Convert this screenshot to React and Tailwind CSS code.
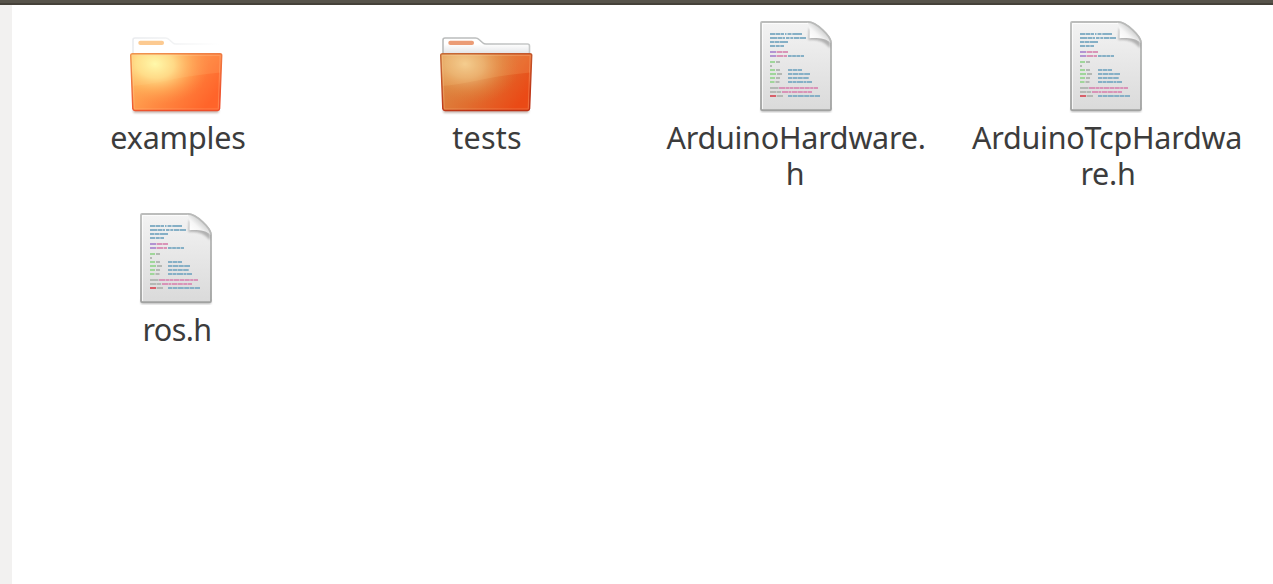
const BLUE = '#86b0c6';
const PINK = '#d994b8';
const PURPLE = '#b394d2';
const GREEN = '#a0d69a';
const GRAY = '#b4b8b4';
const RED = '#d8606a';

// [y, [x, width, colour], ...] for every line of code on the page icon
const CODE = [
  [15, [22, 5, BLUE], [27.5, 4.5, BLUE], [32.5, 3.5, BLUE], [37, 1.5, BLUE], [39.5, 4, BLUE], [44.3, 9.7, BLUE]],
  [19, [22, 7.5, BLUE], [30, 4.5, BLUE], [35, 2, BLUE], [38, 3.5, BLUE], [42.3, 3, BLUE], [46, 5.5, BLUE], [52, 6, BLUE]],
  [23, [22, 4.3, BLUE], [26.7, 4.4, BLUE], [31.5, 8.5, BLUE]],
  [27, [22, 5, BLUE], [27.7, 4, BLUE], [32.3, 3.7, BLUE]],
  [33, [22, 6, PURPLE], [28.6, 5.4, PINK], [34.5, 5.5, PINK]],
  [37, [22, 6, PURPLE], [28.6, 6.4, PINK], [35.6, 3.4, PINK], [40, 3.7, BLUE], [44.2, 3.7, BLUE], [48.4, 4, BLUE], [53, 3, BLUE]],
  [43, [22, 5, GREEN], [28, 4, GRAY]],
  [47, [22, 2, GRAY]],
  [51, [22, 5, GREEN], [28, 4, GRAY], [40, 4.3, BLUE], [44.8, 4.2, BLUE], [49.5, 4.5, BLUE]],
  [55, [22, 6, GREEN], [29, 5, GRAY], [40, 4.3, BLUE], [44.8, 5.2, BLUE], [50.5, 5.2, BLUE], [56.2, 5.8, BLUE]],
  [59, [22, 5, GREEN], [28, 4, GRAY], [40, 4.3, BLUE], [44.8, 4.2, BLUE], [49.5, 5.2, BLUE], [55.2, 5.5, BLUE]],
  [63, [22, 4.5, GREEN], [27.5, 4, GRAY], [40, 4.5, BLUE], [45, 3.4, BLUE], [48.8, 6.2, BLUE], [55.5, 3, BLUE], [59, 5, BLUE]],
  [69, [22, 8.5, GRAY], [31, 6.3, PINK], [37.7, 3.4, PINK], [41.5, 4, PINK], [46, 5.3, PINK], [51.7, 4.3, PINK], [56.5, 5.2, PINK], [62.2, 3.3, PINK], [66, 4, PINK]],
  [73, [22, 6.3, GRAY], [28.8, 4.3, GRAY], [34, 6.3, PINK], [40.7, 2.4, PINK], [43.7, 5.3, PINK], [49.5, 5.3, PINK], [55.3, 4.2, PINK], [60, 4, PINK]],
  [77, [22, 6, RED], [28.7, 6.3, GRAY], [40, 4.3, BLUE], [44.8, 4.2, BLUE], [49.5, 6.2, BLUE], [56.2, 5.3, BLUE], [62, 4.2, BLUE], [66.7, 5.3, BLUE]],
];

function Folder({ id, open }) {
  return (
    <svg className="block size-24 overflow-visible" viewBox="0 0 96 96" aria-hidden="true">
      <defs>
        <linearGradient id={id + '-base'} gradientUnits="userSpaceOnUse" x1="18" y1="34" x2="82" y2="84">
          <stop offset="0" stopColor={open ? '#ffb45c' : '#dc8c46'} />
          <stop offset="0.5" stopColor={open ? '#ff8a42' : '#e06f30'} />
          <stop offset="1" stopColor={open ? '#ff642a' : '#ea4a16'} />
        </linearGradient>
        <radialGradient
          id={id + '-glow'}
          gradientUnits="userSpaceOnUse"
          cx="0"
          cy="0"
          r="1"
          gradientTransform="translate(27 46) rotate(8) scale(54 40)"
        >
          <stop offset="0" stopColor={open ? '#ffffb0' : '#f3cc90'} />
          <stop offset="0.35" stopColor={open ? '#ffee98' : '#ebb878'} stopOpacity="0.78" />
          <stop offset="0.7" stopColor={open ? '#ffc468' : '#e29850'} stopOpacity="0.35" />
          <stop offset="1" stopColor={open ? '#ff9a4a' : '#de7c38'} stopOpacity="0" />
        </radialGradient>
        <linearGradient id={id + '-edge'} x1="0" y1="0" x2="0.4" y2="1">
          <stop offset="0" stopColor={open ? '#ef9450' : '#c56a38'} />
          <stop offset="1" stopColor={open ? '#ee4e2a' : '#bd3114'} />
        </linearGradient>
        <linearGradient id={id + '-back'} x1="0" y1="0" x2="1" y2="0">
          <stop offset="0" stopColor={open ? '#e9ebee' : '#b9bbbb'} />
          <stop offset="0.5" stopColor={open ? '#f2f3f4' : '#bcbebe'} />
          <stop offset="1" stopColor={open ? '#ffffff' : '#c6c8c8'} />
        </linearGradient>
        <linearGradient id={id + '-paper'} x1="0" y1="0" x2="0" y2="1">
          <stop offset="0.35" stopColor="#ffffff" />
          <stop offset="1" stopColor={open ? '#ffffff' : '#dfe1e4'} />
        </linearGradient>
        <filter id={id + '-blur'} x="-10%" y="-100%" width="120%" height="300%">
          <feGaussianBlur stdDeviation="1.2" />
        </filter>
      </defs>
      <rect x="5" y="91" width="86" height="4" rx="2" fill="#5b3020" opacity="0.35" filter={`url(#${id}-blur)`} />
      <path
        d="M5 37V22Q5 20 7 20H37.500Q39.500 20 41 21.500L45 25Q46 26 48 26H89.500Q91.500 26 91.500 28V37Z"
        fill={`url(#${id}-paper)`}
        stroke={`url(#${id}-back)`}
        strokeWidth="1.6"
      />
      <rect x="10.300" y="22.700" width="25.700" height="4.300" rx="2" fill={open ? '#fcca91' : '#eb9c76'} />
      <path
        d="M4.500 35.700H92Q94 35.700 93.700 37.700L91.600 90.700Q91.400 92.500 89.500 92.500H7Q5 92.500 4.800 90.700L2.700 37.700Q2.500 35.700 4.500 35.700Z"
        fill={`url(#${id}-base)`}
      />
      <path d="M3 36H93.500L92 91.500H5.500Z" fill={`url(#${id}-glow)`} />
      <path d="M3 36H93.500L92.500 54.500Q65 57 42 62T4 68Z" fill="#ffd490" opacity="0.15" />
      <path d="M4.200 37.300H92.200L90.300 91H6.200Z" fill="none" stroke="#ffd8a8" strokeOpacity="0.25" strokeWidth="1.2" />
      <path
        d="M4.500 35.700H92Q94 35.700 93.700 37.700L91.600 90.700Q91.400 92.500 89.500 92.500H7Q5 92.500 4.800 90.700L2.700 37.700Q2.500 35.700 4.500 35.700Z"
        fill="none"
        stroke={`url(#${id}-edge)`}
        strokeWidth="1.4"
      />
    </svg>
  );
}

function SourceFile({ id }) {
  return (
    <svg className="block size-24 overflow-visible" viewBox="0 0 96 96" aria-hidden="true">
      <defs>
        <linearGradient id={id + '-page'} x1="0" y1="0" x2="0" y2="1">
          <stop offset="0" stopColor="#f3f3f3" />
          <stop offset="1" stopColor="#dadada" />
        </linearGradient>
        <linearGradient id={id + '-edge'} x1="0" y1="0" x2="0" y2="1">
          <stop offset="0" stopColor="#bcbdbc" />
          <stop offset="1" stopColor="#a1a2a1" />
        </linearGradient>
        <linearGradient id={id + '-curl'} gradientUnits="userSpaceOnUse" x1="63" y1="22" x2="74" y2="10">
          <stop offset="0" stopColor="#ffffff" />
          <stop offset="0.5" stopColor="#f6f6f6" />
          <stop offset="1" stopColor="#cbcccc" />
        </linearGradient>
        <filter id={id + '-blur'} x="-20%" y="-20%" width="140%" height="140%">
          <feGaussianBlur stdDeviation="1.3" />
        </filter>
      </defs>
      <rect x="13" y="90" width="70" height="4" rx="1" fill="#333333" opacity="0.35" filter={`url(#${id}-blur)`} />
      <path
        d="M14 4H60C68 4 83 18 83 25V91Q83 92.200 82 92.200H14Q13 92.200 13 91V5Q13 4 14 4Z"
        fill={`url(#${id}-page)`}
        stroke={`url(#${id}-edge)`}
        strokeWidth="1.8"
      />
      <path d="M14.500 91V5.500H60" fill="none" stroke="#ffffff" strokeOpacity="0.75" />
      <path d="M61 10L60.500 22Q74 20.500 82 30V23Z" fill="#555555" opacity="0.4" filter={`url(#${id}-blur)`} />
      <path d="M59.500 4.500C61.500 7 61.800 12 61.500 20.300C69 19.800 78 20 82.500 25C82 16 69 4 59.500 4.500Z" fill={`url(#${id}-curl)`} />
      <path d="M60 4C68 4 83 18 83 25" fill="none" stroke="#b9bab9" strokeWidth="1.6" />
      {CODE.map(([y, ...parts]) =>
        parts.map(([x, width, fill]) => <rect key={`${y}-${x}`} x={x} y={y} width={width} height="2" fill={fill} />),
      )}
    </svg>
  );
}

function Item({ icon, children }) {
  return (
    <div className="flex h-48 flex-col items-center">
      {icon}
      <div className="mt-[5px] text-center text-[30.5px] leading-9 tracking-[-0.25px] whitespace-nowrap text-[#3c3c3c]">
        {children}
      </div>
    </div>
  );
}

export default function App() {
  return (
    <div className="flex h-screen flex-col overflow-hidden bg-white font-['Noto_Sans','Open_Sans',sans-serif]">
      <header className="h-[5px] shrink-0 border-b-2 border-[#454139] bg-[#57534a]" />
      <div className="flex min-h-0 flex-1">
        <aside className="w-3 shrink-0 bg-[#f2f1f0]" />
        <main className="grid grid-cols-[repeat(4,310px)] content-start pt-[13px] pl-[9px]">
          <Item icon={<Folder id="examples" open />}>
            <span className="ml-1 tracking-[-0.15px]">examples</span>
          </Item>
          <Item icon={<Folder id="tests" />}>
            <span className="ml-0.5 tracking-[0.2px]">tests</span>
          </Item>
          <Item icon={<SourceFile id="hardware" />}>
            <span className="block">ArduinoHardware.</span>
            <span className="block pr-0.5">h</span>
          </Item>
          <Item icon={<SourceFile id="tcp" />}>
            <span className="block pl-0.5">ArduinoTcpHardwa</span>
            <span className="block pl-1">re.h</span>
          </Item>
          <Item icon={<SourceFile id="ros" />}>
            <span className="ml-0.5 tracking-[-0.6px]">ros.h</span>
          </Item>
        </main>
      </div>
    </div>
  );
}
